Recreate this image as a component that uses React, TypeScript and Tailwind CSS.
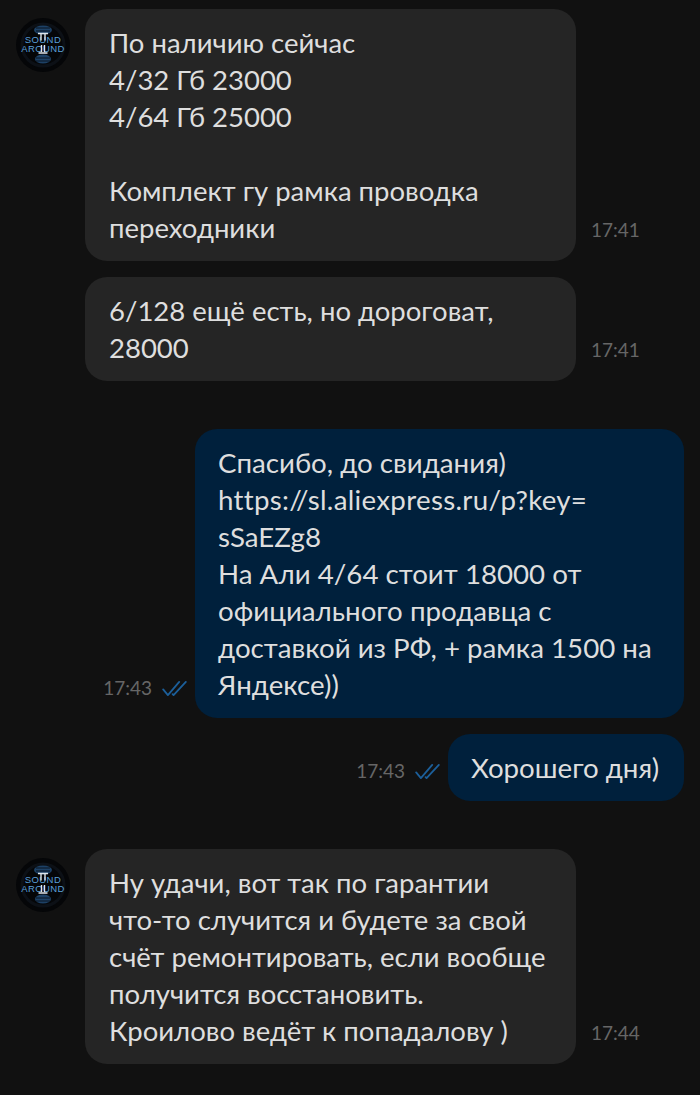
import React from 'react';

const Logo = () => (
    <div className="relative w-[54px] h-[54px] shrink-0 rounded-full bg-[#050608] flex items-center justify-center overflow-hidden">
        <svg className="absolute inset-0" width="54" height="54" viewBox="0 0 54 54" fill="none">
            <circle cx="27" cy="27" r="21" stroke="#0c1016" strokeWidth="3" />
            <ellipse cx="27" cy="12" rx="9" ry="4.5" fill="#1d4166" />
            <ellipse cx="27" cy="41" rx="8" ry="4.5" fill="#1d4166" />
            <path d="M20 10h14M20 13h14M20 40h14M20 43h14" stroke="#0a1420" strokeWidth="1" />
        </svg>
        <div className="relative flex flex-col items-center -mt-[1px] text-[#5a9fd8] text-[9.5px] leading-[8.5px] tracking-[0.4px] font-['Liberation_Sans',sans-serif]">
            <span>SOUND</span>
            <span>AROUND</span>
        </div>
        <svg className="absolute inset-0" width="54" height="54" viewBox="0 0 54 54" fill="none">
            <path d="M22 15.5h10M25 15.5v7M29 15.5v7" stroke="#dfe5ea" strokeWidth="1.4" />
            <path d="M25.5 27v7M28.5 27v7M22.5 35h9" stroke="#dfe5ea" strokeWidth="1.4" />
        </svg>
    </div>
);

const Checks = () => (
    <svg width="25" height="17" viewBox="0 0 26 18" fill="none" stroke="#1c5f9a" strokeWidth="1.9" strokeLinecap="round" strokeLinejoin="round">
        <path d="M1 10l5 6L18 2" />
        <path d="M11 15l1 1L25 2" />
    </svg>
);

const Time = ({ children }: { children: React.ReactNode }) => (
    <span className="text-[19px] leading-[22px] text-[#666666]">{children}</span>
);

const Incoming = ({ lines, time, logo, className }: { lines: string[]; time: string; logo?: boolean; className?: string }) => (
    <div className={`flex items-start ${className ?? ''}`}>
        <div className="w-[85px] shrink-0 pl-[16px] pt-[9px]">{logo && <Logo />}</div>
        <div className="w-[491px] shrink-0 rounded-[22px] bg-[#252525] pl-[24px] pr-[20px] py-[15px] text-[27.5px] leading-[37px] text-[#dedede]">
            {lines.map((l, i) => (
                <div key={i} className="h-[37px] whitespace-nowrap">{l}</div>
            ))}
        </div>
        <div className="self-end pl-[15px] pb-[18px]">
            <Time>{time}</Time>
        </div>
    </div>
);

const Outgoing = ({ lines, time, width, className }: { lines: React.ReactNode[]; time: string; width: string; className?: string }) => (
    <div className={`flex items-end justify-end pr-[16px] ${className ?? ''}`}>
        <div className="flex items-center gap-[10px] pr-[8px] pb-[19px]">
            <Time>{time}</Time>
            <Checks />
        </div>
        <div className={`${width} shrink-0 rounded-[22px] bg-[#00203c] pl-[23px] pr-[20px] py-[15px] text-[27.7px] leading-[37px] text-[#dedede]`}>
            {lines.map((l, i) => (
                <div key={i} className="h-[37px] whitespace-nowrap">{l}</div>
            ))}
        </div>
    </div>
);

export default function App() {
    return (
        <div className="w-[700px] h-[1095px] overflow-hidden bg-[#111111] pt-[9px] font-['Lato',sans-serif] flex flex-col">
            <Incoming
                logo
                time="17:41"
                lines={['По наличию сейчас', '4/32 Гб 23000', '4/64 Гб 25000', '', 'Комплект гу рамка проводка', 'переходники']}
            />
            <Incoming
                className="mt-[16px]"
                time="17:41"
                lines={['6/128 ещё есть, но дороговат,', '28000']}
            />
            <Outgoing
                className="mt-[48px]"
                time="17:43"
                width="w-[489px]"
                lines={[
                    'Спасибо, до свидания)',
                    <span className="tracking-[0.3px]">https://sl.aliexpress.ru/p?key=</span>,
                    'sSaEZg8',
                    'На Али 4/64 стоит 18000 от',
                    'официального продавца с',
                    'доставкой из РФ, + рамка 1500 на',
                    'Яндексе))',
                ]}
            />
            <Outgoing
                className="mt-[16px]"
                time="17:43"
                width="w-[236px]"
                lines={['Хорошего дня)']}
            />
            <Incoming
                logo
                className="mt-[48px]"
                time="17:44"
                lines={[
                    'Ну удачи, вот так по гарантии',
                    'что-то случится и будете за свой',
                    'счёт ремонтировать, если вообще',
                    'получится восстановить.',
                    'Кроилово ведёт к попадалову )',
                ]}
            />
        </div>
    );
}
